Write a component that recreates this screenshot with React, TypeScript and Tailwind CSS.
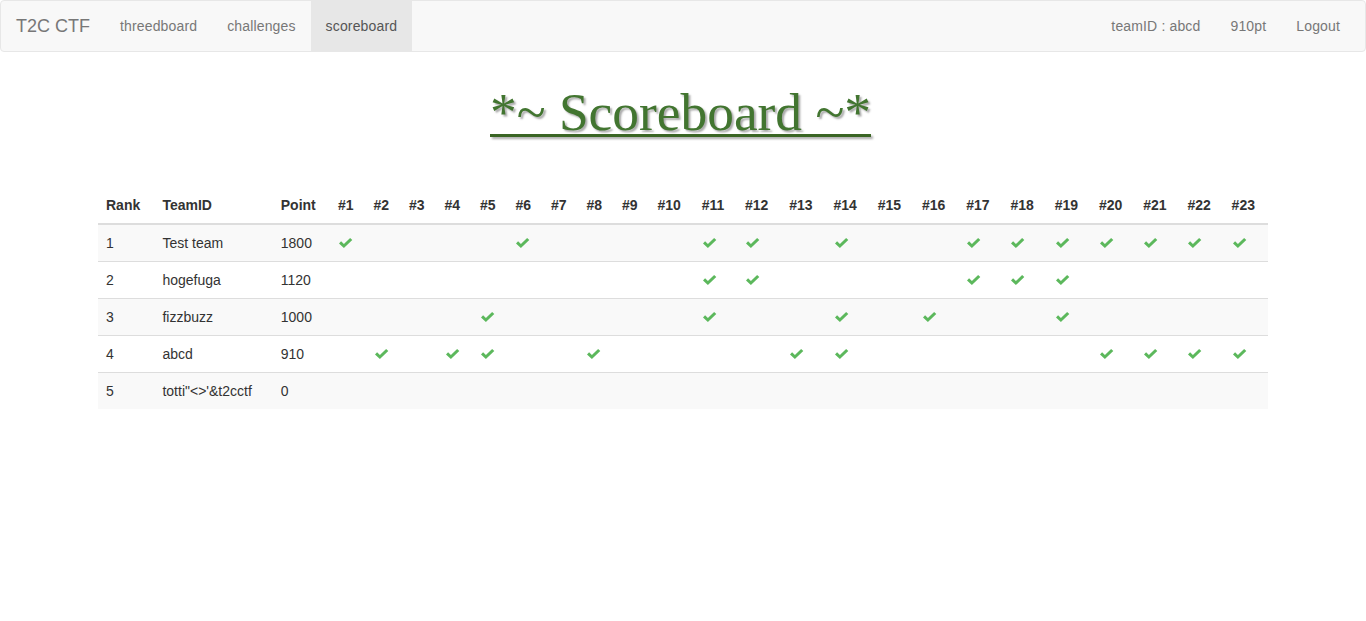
import React from "react";

const Check = () => (
  <svg width="14" height="10" viewBox="0 0 14 10" className="inline-block align-[0px] ml-[1px]">
    <path d="M0 5.4 L2.1 3.3 L4.9 6 L11.1 0 L13.3 2.1 L4.9 10 Z" fill="#5cb85c" />
  </svg>
);

const teams: { rank: number; name: string; point: number; solved: number[] }[] = [
  { rank: 1, name: "Test team", point: 1800, solved: [1, 6, 11, 12, 14, 17, 18, 19, 20, 21, 22, 23] },
  { rank: 2, name: "hogefuga", point: 1120, solved: [11, 12, 17, 18, 19] },
  { rank: 3, name: "fizzbuzz", point: 1000, solved: [5, 11, 14, 16, 19] },
  { rank: 4, name: "abcd", point: 910, solved: [2, 4, 5, 8, 13, 14, 20, 21, 22, 23] },
  { rank: 5, name: "totti\"<>'&t2cctf", point: 0, solved: [] },
];

const cols = Array.from({ length: 23 }, (_, i) => i + 1);

export default function App() {
  return (
    <div className="min-h-[621px] bg-white text-[#333] text-[14px] leading-[20px]" style={{ fontFamily: '"Liberation Sans", Arial, sans-serif' }}>
      <nav className="h-[52px] bg-[#f8f8f8] border border-[#e7e7e7] rounded-[4px] flex items-stretch justify-between">
        <div className="flex items-stretch">
          <span className="px-[15px] flex items-center text-[18px] text-[#777]">T2C CTF</span>
          <span className="px-[15px] flex items-center text-[#777] tracking-[0.15px]">threedboard</span>
          <span className="px-[15px] flex items-center text-[#777] tracking-[0.15px]">challenges</span>
          <span className="px-[15px] flex items-center text-[#555] bg-[#e7e7e7] tracking-[0.15px]">scoreboard</span>
        </div>
        <div className="flex items-stretch pr-[10px] tracking-[0.15px]">
          <span className="px-[15px] flex items-center text-[#777]">teamID : abcd</span>
          <span className="px-[15px] flex items-center text-[#777]">910pt</span>
          <span className="px-[15px] flex items-center text-[#777]">Logout</span>
        </div>
      </nav>
      <div className="pt-[31px] pr-[5px] flex justify-center">
        <h1
          className="text-[53.4px] leading-[1.1] text-[#427530] underline decoration-[3px] decoration-[#3a6524] underline-offset-[4px] [text-shadow:2px_2px_2px_#aaa]"
          style={{ fontFamily: '"Liberation Serif", "Times New Roman", serif' }}
        >
          *~ Scoreboard ~*
        </h1>
      </div>
      <div className="w-[1170px] mx-auto mt-[45px]">
        <table className="w-full border-collapse text-left">
          <thead>
            <tr>
              <th className="p-[8px] font-bold border-b-2 border-[#ddd]">Rank</th>
              <th className="p-[8px] font-bold border-b-2 border-[#ddd]">TeamID</th>
              <th className="p-[8px] font-bold border-b-2 border-[#ddd]">Point</th>
              {cols.map((c) => (
                <th key={c} className="p-[8px] font-bold border-b-2 border-[#ddd]">#{c}</th>
              ))}
            </tr>
          </thead>
          <tbody>
            {teams.map((t, i) => (
              <tr key={t.rank} className={i % 2 === 0 ? "bg-[#f9f9f9]" : ""}>
                <td className="p-[8px] border-t border-[#ddd]">{t.rank}</td>
                <td className="p-[8px] border-t border-[#ddd]">{t.name}</td>
                <td className="p-[8px] border-t border-[#ddd]">{t.point}</td>
                {cols.map((c) => (
                  <td key={c} className="p-[8px] border-t border-[#ddd]">
                    {t.solved.includes(c) ? <Check /> : null}
                  </td>
                ))}
              </tr>
            ))}
          </tbody>
        </table>
      </div>
    </div>
  );
}
